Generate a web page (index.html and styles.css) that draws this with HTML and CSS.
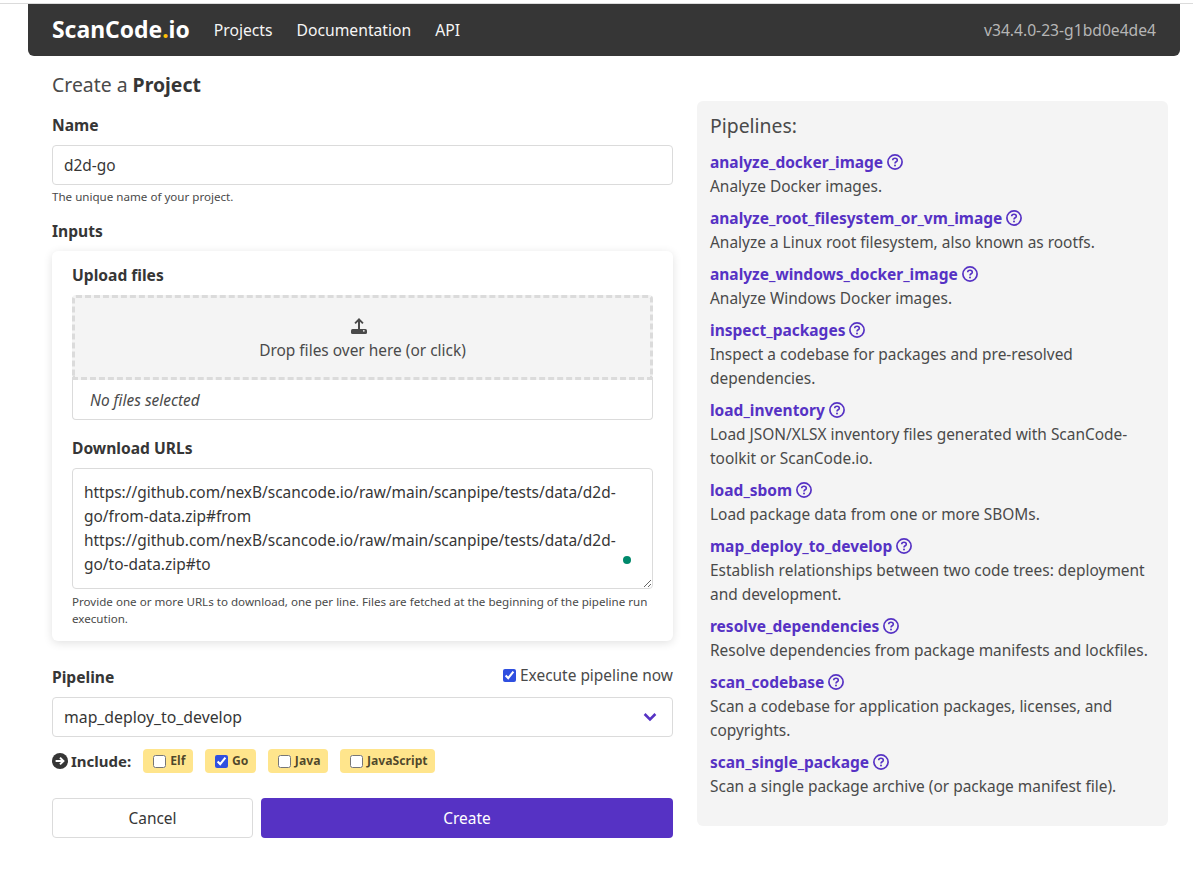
FILE: index.html
```html
<!DOCTYPE html>
<html lang="en">
<head>
    <meta charset="UTF-8">
    <meta name="viewport" content="width=device-width, initial-scale=1.0">
    <title>Create a Project - ScanCode.io</title>
    <link rel="stylesheet" href="styles.css">
</head>
<body>

    <div class="top-rule">
        <nav class="navbar">
            <a class="brand" href="#">ScanCode<span class="brand-dot">.</span>io</a>
            <a class="nav-link" href="#">Projects</a>
            <a class="nav-link" href="#">Documentation</a>
            <a class="nav-link" href="#">API</a>
            <span class="version">v34.4.0-23-g1bd0e4de4</span>
        </nav>
    </div>

    <main class="columns">
        <form class="left-col">
            <h2 class="page-title">Create a <strong>Project</strong></h2>

            <label class="label" for="name">Name</label>
            <input class="input" type="text" id="name" value="d2d-go">
            <p class="help">The unique name of your project.</p>

            <div class="label inputs-label">Inputs</div>
            <div class="box">
                <div class="label">Upload files</div>
                <div class="drop-zone">
                    <svg class="upload-icon" viewBox="0 0 16 16" width="16" height="16">
                        <path d="M8 0 3.4 4.8l1.3 1.3L7 3.8V11h2V3.8l2.3 2.3 1.3-1.3z" fill="#4a4a4a"/>
                        <rect x="0" y="11" width="16" height="5" rx="1.5" fill="#4a4a4a"/>
                        <circle cx="12.8" cy="12.8" r="0.9" fill="#f4f4f4"/>
                    </svg>
                    <span>Drop files over here (or click)</span>
                </div>
                <div class="file-name">No files selected</div>

                <label class="label urls-label" for="urls">Download URLs</label>
                <div class="textarea-wrap">
                    <textarea class="textarea" id="urls" spellcheck="false">https://github.com/nexB/scancode.io/raw/main/scanpipe/tests/data/d2d-go/from-data.zip#from
https://github.com/nexB/scancode.io/raw/main/scanpipe/tests/data/d2d-go/to-data.zip#to</textarea>
                    <span class="status-dot"></span>
                </div>
                <p class="help help-urls">Provide one or more URLs to download, one per line. Files are fetched at the beginning of the pipeline run execution.</p>
            </div>

            <div class="pipeline-head">
                <label class="label" for="pipeline">Pipeline</label>
                <label class="execute"><input type="checkbox" checked> Execute pipeline now</label>
            </div>
            <div class="select-wrap">
                <select id="pipeline">
                    <option>map_deploy_to_develop</option>
                </select>
                <svg class="chevron" viewBox="0 0 14 10" width="14" height="10">
                    <path d="M1.6 2 7 7.4 12.4 2" fill="none" stroke="#5632c4" stroke-width="2.6"/>
                </svg>
            </div>

            <div class="include-row">
                <svg class="arrow-icon" viewBox="0 0 16 16" width="16" height="16">
                    <circle cx="8" cy="8" r="8" fill="#363636"/>
                    <path d="M3.6 8h7.6M8 4.6 11.4 8 8 11.4" fill="none" stroke="#fff" stroke-width="2"/>
                </svg>
                <strong class="include-label">Include:</strong>
                <label class="tag"><input type="checkbox"> Elf</label>
                <label class="tag"><input type="checkbox" checked> Go</label>
                <label class="tag"><input type="checkbox"> Java</label>
                <label class="tag"><input type="checkbox"> JavaScript</label>
            </div>

            <div class="buttons">
                <a class="button cancel" href="#">Cancel</a>
                <button class="button create" type="button">Create</button>
            </div>
        </form>

        <aside class="pipelines">
            <h3 class="pipelines-title">Pipelines:</h3>

            <div class="pipeline-item">
                <a class="pipeline-name" href="#">analyze_docker_image <svg class="help-icon" viewBox="0 0 16 16" width="16" height="16"><use href="#question"/></svg></a>
                <p>Analyze Docker images.</p>
            </div>
            <div class="pipeline-item">
                <a class="pipeline-name" href="#">analyze_root_filesystem_or_vm_image <svg class="help-icon" viewBox="0 0 16 16" width="16" height="16"><use href="#question"/></svg></a>
                <p>Analyze a Linux root filesystem, also known as rootfs.</p>
            </div>
            <div class="pipeline-item">
                <a class="pipeline-name" href="#">analyze_windows_docker_image <svg class="help-icon" viewBox="0 0 16 16" width="16" height="16"><use href="#question"/></svg></a>
                <p>Analyze Windows Docker images.</p>
            </div>
            <div class="pipeline-item">
                <a class="pipeline-name" href="#">inspect_packages <svg class="help-icon" viewBox="0 0 16 16" width="16" height="16"><use href="#question"/></svg></a>
                <p>Inspect a codebase for packages and pre-resolved<br>dependencies.</p>
            </div>
            <div class="pipeline-item">
                <a class="pipeline-name" href="#">load_inventory <svg class="help-icon" viewBox="0 0 16 16" width="16" height="16"><use href="#question"/></svg></a>
                <p>Load JSON/XLSX inventory files generated with ScanCode-<br>toolkit or ScanCode.io.</p>
            </div>
            <div class="pipeline-item">
                <a class="pipeline-name" href="#">load_sbom <svg class="help-icon" viewBox="0 0 16 16" width="16" height="16"><use href="#question"/></svg></a>
                <p>Load package data from one or more SBOMs.</p>
            </div>
            <div class="pipeline-item">
                <a class="pipeline-name" href="#">map_deploy_to_develop <svg class="help-icon" viewBox="0 0 16 16" width="16" height="16"><use href="#question"/></svg></a>
                <p>Establish relationships between two code trees: deployment<br>and development.</p>
            </div>
            <div class="pipeline-item">
                <a class="pipeline-name" href="#">resolve_dependencies <svg class="help-icon" viewBox="0 0 16 16" width="16" height="16"><use href="#question"/></svg></a>
                <p>Resolve dependencies from package manifests and lockfiles.</p>
            </div>
            <div class="pipeline-item">
                <a class="pipeline-name" href="#">scan_codebase <svg class="help-icon" viewBox="0 0 16 16" width="16" height="16"><use href="#question"/></svg></a>
                <p>Scan a codebase for application packages, licenses, and<br>copyrights.</p>
            </div>
            <div class="pipeline-item">
                <a class="pipeline-name" href="#">scan_single_package <svg class="help-icon" viewBox="0 0 16 16" width="16" height="16"><use href="#question"/></svg></a>
                <p>Scan a single package archive (or package manifest file).</p>
            </div>
        </aside>
    </main>

    <svg class="icon-defs" width="0" height="0">
        <symbol id="question" viewBox="0 0 16 16">
            <circle cx="8" cy="8" r="7.1" fill="none" stroke="currentColor" stroke-width="1.7"/>
            <path d="M5.7 6.3c0-1.3 1.1-2 2.3-2s2.3.7 2.3 1.9c0 1.6-2.3 1.5-2.3 3.2" fill="none" stroke="currentColor" stroke-width="1.6"/>
            <circle cx="8" cy="11.6" r="1" fill="currentColor"/>
        </symbol>
    </svg>

</body>
</html>
```

FILE: styles.css
```css
* {
    box-sizing: border-box;
}

body {
    margin: 0;
    padding-top: 3px;
    font-family: "Noto Sans", sans-serif;
    font-size: 15.45px;
    line-height: 24px;
    color: #4a4a4a;
    background-color: #ffffff;
}

a {
    text-decoration: none;
}

p {
    margin: 0;
}

/* Navbar */
.top-rule {
    border-top: 1px solid #dbdbdb;
}

.navbar {
    display: flex;
    align-items: center;
    height: 52px;
    margin: 0 13px 0 28px;
    padding: 0 24px;
    background-color: #363636;
    border-radius: 0 0 6px 6px;
}

.brand {
    margin-right: 24px;
    font-size: 22.9px;
    font-weight: 700;
    color: #ffffff;
}

.brand-dot {
    color: #ffc107;
}

.nav-link {
    margin-right: 24px;
    font-size: 15.7px;
    color: #f5f5f5;
}

.version {
    margin-left: auto;
    font-size: 15.65px;
    color: #b5b5b5;
}

/* Columns */
.columns {
    display: grid;
    grid-template-columns: 621px 471px;
    column-gap: 24px;
    padding: 0 25px 0 52px;
}

.page-title {
    margin: 17px 0 16px;
    font-size: 19.4px;
    font-weight: 400;
    line-height: 24px;
}

.page-title strong {
    color: #363636;
}

.label {
    display: block;
    font-size: 15.6px;
    font-weight: 700;
    color: #363636;
    margin-bottom: 8px;
}

.input,
.textarea,
.select-wrap select {
    display: block;
    width: 100%;
    font-family: inherit;
    font-size: inherit;
    color: #363636;
    background-color: #ffffff;
    border: 1px solid #dbdbdb;
    border-radius: 4px;
    outline: none;
}

.input {
    height: 40px;
    padding: 0 11px;
}

.help {
    margin-top: 3px;
    font-size: 11.6px;
    line-height: 17px;
    color: #4a4a4a;
}

.inputs-label {
    margin-top: 14px;
}

/* Inputs box */
.box {
    padding: 12px 20px 14px;
    margin-bottom: 24px;
    border-radius: 6px;
    background-color: #ffffff;
    box-shadow: 0 2px 10px rgba(10, 10, 10, 0.12);
}

.drop-zone {
    display: flex;
    flex-direction: column;
    align-items: center;
    justify-content: center;
    height: 85px;
    padding-top: 4px;
    background-color: #f4f4f4;
    border: 3px dashed #dbdbdb;
    border-radius: 4px 4px 0 0;
}

.upload-icon {
    margin: 0 8px 4px 0;
}

.file-name {
    height: 40px;
    padding: 8px 17px;
    font-style: italic;
    border: 1px solid #dbdbdb;
    border-top: 0;
    border-radius: 0 0 4px 4px;
}

.urls-label {
    margin-top: 16px;
}

.textarea-wrap {
    position: relative;
}

.textarea {
    height: 121px;
    padding: 11px;
    line-height: 24px;
    resize: vertical;
}

.status-dot {
    position: absolute;
    right: 22px;
    bottom: 25px;
    width: 8px;
    height: 8px;
    background-color: #00896b;
    border-radius: 50%;
}

.help-urls {
    margin-top: 4px;
}

/* Pipeline field */
.pipeline-head {
    display: flex;
    justify-content: space-between;
}

.execute {
    display: flex;
    align-items: center;
    height: 20px;
}

.execute input {
    width: 13px;
    height: 13px;
    margin: 0 4px 0 0;
    accent-color: #2f4fe0;
}

.select-wrap {
    position: relative;
}

.select-wrap select {
    height: 40px;
    padding: 0 11px;
    font-size: 15.8px;
    appearance: none;
}

.chevron {
    position: absolute;
    top: 15px;
    right: 16px;
}

.include-row {
    display: flex;
    align-items: center;
    margin-top: 12px;
}

.arrow-icon {
    margin-right: 3px;
}

.include-label {
    margin-right: 12px;
    font-size: 15px;
    color: #363636;
}

.tag {
    display: flex;
    align-items: center;
    height: 24px;
    padding: 0 7.5px 0 10px;
    margin-right: 12px;
    font-size: 12.2px;
    font-weight: 700;
    color: rgba(0, 0, 0, 0.7);
    background-color: #ffe58c;
    border-radius: 4px;
}

.tag input {
    width: 13px;
    height: 13px;
    margin: 0 4px 0 0;
    accent-color: #2f4fe0;
}

.buttons {
    display: grid;
    grid-template-columns: 201px 1fr;
    column-gap: 8px;
    margin-top: 25px;
}

.button {
    display: flex;
    align-items: center;
    justify-content: center;
    height: 40px;
    font-family: inherit;
    font-size: inherit;
    border-radius: 4px;
}

.cancel {
    color: #363636;
    background-color: #ffffff;
    border: 1px solid #dbdbdb;
}

.create {
    color: #ffffff;
    background-color: #5632c4;
    border: 0;
}

/* Pipelines panel */
.pipelines {
    align-self: start;
    margin-top: 45px;
    height: 725px;
    padding: 13px 13px;
    background-color: #f4f4f4;
    border-radius: 6px;
}

.pipelines-title {
    margin: 0 0 12px;
    font-size: 19.4px;
    font-weight: 400;
    line-height: 24px;
}

.pipeline-item {
    margin-bottom: 8px;
}

.pipeline-name {
    display: flex;
    align-items: center;
    gap: 4px;
    font-size: 15.5px;
    font-weight: 700;
    color: #5632c4;
}

.help-icon {
    flex: none;
}

.icon-defs {
    position: absolute;
}
```
